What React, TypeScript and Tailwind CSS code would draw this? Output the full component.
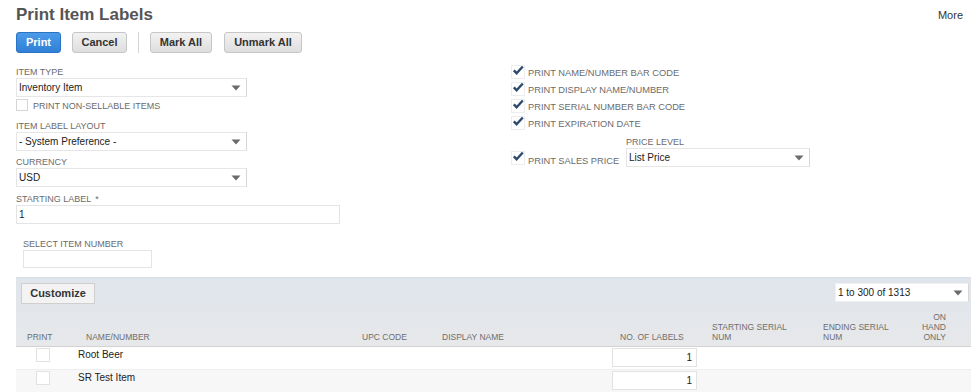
import React from 'react';

const Arrow = () => (
  <svg width="10" height="6" viewBox="0 0 10 6" className="shrink-0">
    <path d="M0.5 0.5 H9.5 L5 5.5 Z" fill="#6b6b6b" />
  </svg>
);

const Select = ({ value, className }: { value: string; className: string }) => (
  <div
    className={`flex items-center justify-between border border-[#e6e6e6] border-r-[#d6d6d6] bg-white pl-[2px] pr-[5px] text-[10px] text-[#222] ${className}`}
  >
    <span>{value}</span>
    <Arrow />
  </div>
);

const Label = ({ children }: { children: React.ReactNode }) => (
  <div className="h-[12px] text-[9px] uppercase leading-[12px] text-[#6b6b6b]">{children}</div>
);

const Checked = () => (
  <svg width="14" height="14" viewBox="0 0 14 14" className="shrink-0">
    <rect x="0.5" y="0.5" width="13" height="13" fill="#fff" stroke="#ededed" />
    <path d="M2.8 5.4 L5.6 8.2 L11.8 1.5" fill="none" stroke="#2d4a6e" strokeWidth="2.4" />
  </svg>
);

const CheckRow = ({ label }: { label: string }) => (
  <div className="flex h-[17px] items-start gap-[3px]">
    <Checked />
    <span className="text-[9.3px] leading-[17px] text-[#6b6b6b]">{label}</span>
  </div>
);

const Btn = ({ children, className }: { children: React.ReactNode; className: string }) => (
  <button
    className={`h-[21px] rounded-[3px] border border-[#c6c6c6] bg-gradient-to-b from-[#f2f2f2] to-[#dedede] text-center text-[11px] font-bold text-[#333] ${className}`}
  >
    {children}
  </button>
);

const cols = 'grid grid-cols-[54px_285px_80px_170px_100px_111px_94px_61px]';

const rows = ['Root Beer', 'SR Test Item'];

export default function App() {
  return (
    <div className="h-[392px] w-[980px] overflow-hidden bg-white font-['Liberation_Sans',Arial,sans-serif]">
      <div className="flex h-[25px] items-start justify-between pl-[16px] pr-[17px] pt-[5px]">
        <h1 className="text-[17px] font-bold leading-[20px] text-[#555]">Print Item Labels</h1>
        <span className="mt-[1px] text-[11px] leading-[18px] text-[#333]">More</span>
      </div>

      <div className="mt-[7px] flex items-center pl-[16px]">
        <button className="h-[21px] w-[45px] rounded-[3px] border border-[#2a74c4] bg-gradient-to-b from-[#4c9aea] to-[#2f80d6] text-[11px] font-bold text-white">
          Print
        </button>
        <Btn className="ml-[11px] w-[55px]">Cancel</Btn>
        <div className="mx-[11px] h-[21px] w-px bg-[#d4d4d4]" />
        <Btn className="w-[62px]">Mark All</Btn>
        <Btn className="ml-[12px] w-[78px]">Unmark All</Btn>
      </div>

      <div className="mt-[10px] flex pl-[16px]">
        <div className="w-[495px] pt-[3px]">
          <Label>Item Type</Label>
          <Select value="Inventory Item" className="h-[19px] w-[231px]" />
          <div className="mt-[2px] flex items-end gap-[5px]">
            <span className="h-[12px] w-[12px] border border-[#d6d6d6] bg-white" />
            <span className="text-[9px] leading-[9px] text-[#6b6b6b]">PRINT NON-SELLABLE ITEMS</span>
          </div>
          <div className="mt-[9px]">
            <Label>Item Label Layout</Label>
            <Select value="- System Preference -" className="h-[19px] w-[231px]" />
          </div>
          <div className="mt-[5px]">
            <Label>Currency</Label>
            <Select value="USD" className="h-[19px] w-[231px]" />
          </div>
          <div className="mt-[6px]">
            <Label>
              Starting Label <span className="ml-[2px]">*</span>
            </Label>
            <div className="flex h-[19px] w-[324px] items-center border border-[#e4e4e4] bg-white pl-[2px] text-[10px] text-[#222]">
              1
            </div>
          </div>
          <div className="ml-[7px] mt-[14px]">
            <Label>Select Item Number</Label>
            <div className="h-[18px] w-[129px] border border-[#e4e4e4] bg-white" />
          </div>
        </div>

        <div className="flex flex-col pt-[2px]">
          <CheckRow label="PRINT NAME/NUMBER BAR CODE" />
          <CheckRow label="PRINT DISPLAY NAME/NUMBER" />
          <CheckRow label="PRINT SERIAL NUMBER BAR CODE" />
          <CheckRow label="PRINT EXPIRATION DATE" />
          <div className="mt-[3px] flex items-start">
            <div className="flex w-[115px] items-start gap-[3px] pt-[15px]">
              <Checked />
              <span className="mt-[2px] text-[9.3px] leading-[17px] text-[#6b6b6b]">PRINT SALES PRICE</span>
            </div>
            <div>
              <Label>Price Level</Label>
              <Select value="List Price" className="h-[19px] w-[184px]" />
            </div>
          </div>
        </div>
      </div>

      <div className="ml-[16px] mt-[9px] w-[955px]">
        <div className="bg-gradient-to-b from-[#dfe5ec] to-[#e7e8ea]">
          <div className="flex h-[35px] items-start justify-between border-t border-[#d8dee5] pl-[5px] pr-[2px] pt-[5px]">
            <button className="h-[21px] w-[74px] border border-[#cfcfcf] bg-[#f3f3f3] text-[11px] font-bold text-[#333]">
              Customize
            </button>
            <Select value="1 to 300 of 1313" className="h-[19px] w-[134px] border-[#f0f0f0]" />
          </div>
          <div className={`${cols} h-[35px] items-end border-b border-[#d2d2d2] text-[8.5px] uppercase leading-[10px] text-[#6e6e6e]`}>
            <div className="pb-[4px] pl-[11px]">Print</div>
            <div className="pb-[4px] pl-[16px]">Name/Number</div>
            <div className="pb-[4px] pl-[7px]">UPC Code</div>
            <div className="pb-[4px] pl-[7px]">Display Name</div>
            <div className="pb-[4px] pl-[15px]">No. of Labels</div>
            <div className="pb-[4px] pl-[7px]">
              Starting Serial
              <br />
              Num
            </div>
            <div className="pb-[4px] pl-[7px]">
              Ending Serial
              <br />
              Num
            </div>
            <div className="pb-[4px] pr-[25px] text-right">
              On
              <br />
              Hand
              <br />
              Only
            </div>
          </div>
        </div>

        {rows.map((name, i) => (
          <div
            key={name}
            className={`${cols} h-[23px] items-start border-b border-[#efefef] text-[10px] text-[#222] ${
              i % 2 === 1 ? 'bg-[#f7f7f7]' : 'bg-white'
            }`}
          >
            <div className="flex justify-center pt-[1px]">
              <span className="h-[14px] w-[14px] border border-[#e2e2e2] bg-white" />
            </div>
            <div className="pl-[8px] pt-[1px] leading-[14px]">{name}</div>
            <div />
            <div />
            <div className="pl-[7px] pt-[1px]">
              <div className="flex h-[19px] w-[85px] items-center justify-end border border-[#e2e2e2] bg-white pr-[4px]">
                1
              </div>
            </div>
            <div />
            <div />
            <div />
          </div>
        ))}
      </div>
    </div>
  );
}
